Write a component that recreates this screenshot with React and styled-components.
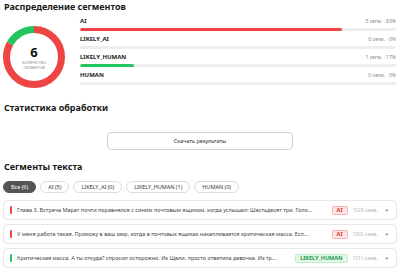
import React from "react";
import styled, { createGlobalStyle } from "styled-components";

const GlobalStyle = createGlobalStyle`
  html, body {
    margin: 0;
    padding: 0;
    background: #fff;
    font-family: "Noto Sans", "Open Sans", sans-serif;
    color: #222;
  }
`;

const distribution = [
  { label: "AI", count: 5, pct: 83, color: "#f04444" },
  { label: "LIKELY_AI", count: 0, pct: 0, color: "#f59e0b" },
  { label: "LIKELY_HUMAN", count: 1, pct: 17, color: "#22c55e" },
  { label: "HUMAN", count: 0, pct: 0, color: "#22c55e" },
];

const tabs = [
  { label: "Все (6)", active: true },
  { label: "AI (5)" },
  { label: "LIKELY_AI (0)" },
  { label: "LIKELY_HUMAN (1)" },
  { label: "HUMAN (0)" },
];

const segments = [
  {
    text: "Глава 3. Встреча Марат почти поравнялся с синим почтовым ящиком, когда услышал: Шестьдесят три. Голо...",
    kind: "ai",
    badge: "AI",
    chars: 1029,
  },
  {
    text: "У меня работа такая. Прихожу в ваш мир, когда в почтовых ящиках накапливается критическая масса. Есл...",
    kind: "ai",
    badge: "AI",
    chars: 1002,
  },
  {
    text: "Критическая масса. А ты откуда? спросил осторожно. Из Щели, просто ответила девочка. Из тр...",
    kind: "human",
    badge: "LIKELY_HUMAN",
    chars: 1011,
  },
];

const Donut = () => {
  const r = 27.5;
  const c = 2 * Math.PI * r;
  const red = c * 0.83;
  const green = c * 0.17;
  return (
    <svg width="62" height="62" viewBox="0 0 62 62">
      <g transform="rotate(-90 31 31)">
        <circle cx="31" cy="31" r={r} fill="none" stroke="#ef4444" strokeWidth="7"
          strokeDasharray={`${red} ${c}`} />
        <circle cx="31" cy="31" r={r} fill="none" stroke="#22c55e" strokeWidth="7"
          strokeDasharray={`${green} ${c}`} strokeDashoffset={-red} />
      </g>
    </svg>
  );
};

const App = () => {
  return (
    <Page>
      <GlobalStyle />
      <Heading>Распределение сегментов</Heading>
      <DistSection>
        <DonutBox>
          <Donut />
          <DonutCenter>
            <Total>6</Total>
            <TotalCaption>количество<br />сегментов</TotalCaption>
          </DonutCenter>
        </DonutBox>
        <BarList>
          {distribution.map((d) => (
            <BarRow key={d.label}>
              <BarHead>
                <BarLabel>{d.label}</BarLabel>
                <BarValue>{d.count} сегм. · {d.pct}%</BarValue>
              </BarHead>
              <Track>
                <Fill $color={d.color} style={{ width: `${d.pct}%` }} />
              </Track>
            </BarRow>
          ))}
        </BarList>
      </DistSection>

      <Heading $top={14}>Статистика обработки</Heading>
      <ButtonRow>
        <DownloadButton>Скачать результаты</DownloadButton>
      </ButtonRow>

      <Heading>Сегменты текста</Heading>
      <Tabs>
        {tabs.map((t) => (
          <Tab key={t.label} $active={t.active}>{t.label}</Tab>
        ))}
      </Tabs>
      <SegmentList>
        {segments.map((s, i) => (
          <Segment key={i}>
            <Marker $kind={s.kind} />
            <SegmentText>{s.text}</SegmentText>
            <Badge $kind={s.kind}>{s.badge}</Badge>
            <Chars>{s.chars} симв.</Chars>
            <Chevron>▼</Chevron>
          </Segment>
        ))}
      </SegmentList>
    </Page>
  );
};

const Page = styled.div`
  width: 400px;
  height: 270px;
  overflow: hidden;
  box-sizing: border-box;
  padding: 1px 4px 0 4px;
`;

const Heading = styled.h2`
  margin: ${({ $top }) => $top || 0}px 0 0 0;
  font-size: 9px;
  font-weight: 700;
  line-height: 11px;
  color: #1a1a1a;
`;

const DistSection = styled.div`
  display: flex;
  align-items: flex-start;
  gap: 15px;
  margin-top: 6px;
`;

const DonutBox = styled.div`
  position: relative;
  width: 62px;
  height: 62px;
  margin-top: 8px;
  margin-left: -1px;
`;

const DonutCenter = styled.div`
  position: absolute;
  inset: 0;
  display: flex;
  flex-direction: column;
  align-items: center;
  justify-content: center;
`;

const Total = styled.div`
  font-size: 13px;
  font-weight: 700;
  line-height: 14px;
  color: #111;
`;

const TotalCaption = styled.div`
  font-size: 3.6px;
  line-height: 5px;
  text-transform: uppercase;
  color: #888;
  text-align: center;
  margin-top: 1px;
`;

const BarList = styled.div`
  flex: 1;
  display: flex;
  flex-direction: column;
  gap: 5px;
`;

const BarRow = styled.div`
  display: flex;
  flex-direction: column;
  gap: 3px;
`;

const BarHead = styled.div`
  display: flex;
  justify-content: space-between;
  align-items: flex-end;
  height: 7px;
`;

const BarLabel = styled.span`
  font-size: 6px;
  font-weight: 700;
  line-height: 7px;
  color: #222;
`;

const BarValue = styled.span`
  font-size: 5px;
  line-height: 6px;
  color: #888;
  margin-bottom: 1px;
`;

const Track = styled.div`
  height: 3px;
  border-radius: 2px;
  background: #eeeeee;
  overflow: hidden;
`;

const Fill = styled.div`
  height: 100%;
  border-radius: 2px;
  background: ${({ $color }) => $color};
`;

const ButtonRow = styled.div`
  display: flex;
  justify-content: center;
  margin-top: 19px;
  margin-bottom: 11px;
`;

const DownloadButton = styled.button`
  width: 186px;
  height: 18px;
  border: 1px solid #cfcfcf;
  border-radius: 4px;
  background: #fff;
  font-family: inherit;
  font-size: 5.5px;
  color: #333;
  padding: 0;
`;

const Tabs = styled.div`
  display: flex;
  gap: 4px;
  margin-top: 9px;
  margin-left: -1px;
`;

const Tab = styled.div`
  height: 12px;
  padding: 0 7px;
  border-radius: 6px;
  box-sizing: border-box;
  display: flex;
  align-items: center;
  font-size: 5.5px;
  border: 1px solid ${({ $active }) => ($active ? "#555" : "#ddd")};
  background: ${({ $active }) => ($active ? "#555" : "#fff")};
  color: ${({ $active }) => ($active ? "#fff" : "#333")};
`;

const SegmentList = styled.div`
  display: flex;
  flex-direction: column;
  gap: 4px;
  margin-top: 7px;
  margin-left: -1px;
  margin-right: -1px;
`;

const Segment = styled.div`
  height: 20px;
  box-sizing: border-box;
  border: 1px solid #e6e6e6;
  border-radius: 4px;
  display: flex;
  align-items: center;
  padding: 0 7px 0 6px;
  gap: 4px;
`;

const Marker = styled.div`
  width: 2px;
  height: 8px;
  border-radius: 1px;
  flex-shrink: 0;
  margin-right: 1px;
  background: ${({ $kind }) => ($kind === "ai" ? "#ef4444" : "#22c55e")};
`;

const SegmentText = styled.div`
  flex: 1;
  min-width: 0;
  font-size: 5.5px;
  color: #444;
  white-space: nowrap;
  overflow: hidden;
  text-overflow: ellipsis;
`;

const Badge = styled.span`
  flex-shrink: 0;
  height: 9px;
  padding: 0 4px;
  box-sizing: border-box;
  display: flex;
  align-items: center;
  border-radius: 2px;
  font-size: 5.5px;
  font-weight: 700;
  border: 1px solid ${({ $kind }) => ($kind === "ai" ? "#f5b5b5" : "#bdeecb")};
  background: ${({ $kind }) => ($kind === "ai" ? "#fde3e3" : "#e4f9ea")};
  color: ${({ $kind }) => ($kind === "ai" ? "#d33" : "#22994a")};
`;

const Chars = styled.span`
  flex-shrink: 0;
  font-size: 4.8px;
  color: #b4b4b4;
  width: 28px;
  margin-left: 1px;
`;

const Chevron = styled.span`
  flex-shrink: 0;
  font-size: 4.5px;
  color: #888;
`;

export default App;
